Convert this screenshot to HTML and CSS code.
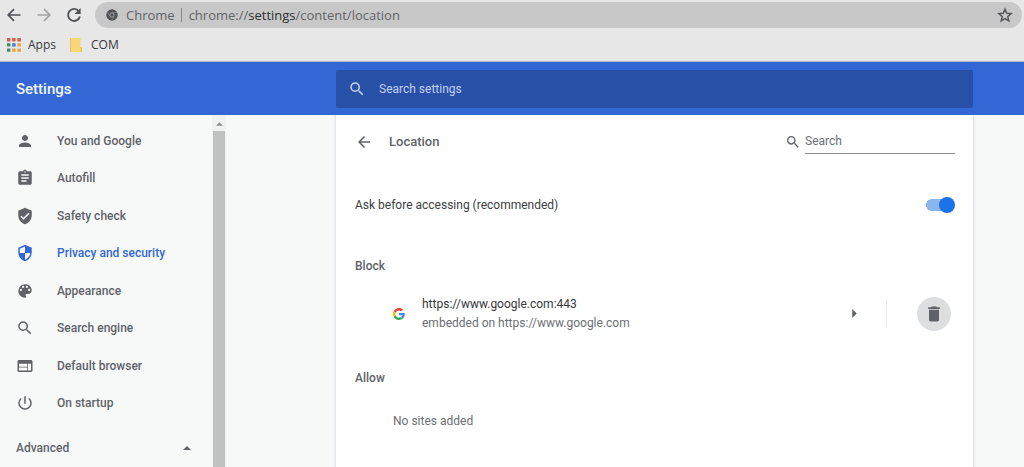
FILE: index.html
```html
<!DOCTYPE html>
<html lang="en">
<head>
<meta charset="utf-8">
<meta name="viewport" content="width=device-width, initial-scale=1">
<title>Settings - Location</title>
<link rel="stylesheet" href="styles.css">
</head>
<body>
<div class="browser">
  <div class="toolbar">
    <button class="tool" aria-label="Back"><svg viewBox="0 0 16 16"><path d="M14.500 8H2.500M8 2.200L2.200 8L8 13.800" fill="none" stroke="currentColor" stroke-width="1.700"/></svg></button>
    <button class="tool tool-off" aria-label="Forward"><svg viewBox="0 0 16 16"><path d="M1.500 8H13.500M8 2.200L13.800 8L8 13.800" fill="none" stroke="currentColor" stroke-width="1.700"/></svg></button>
    <button class="tool" aria-label="Reload"><svg viewBox="0 0 16 16"><path d="M12.800 4.200A6 6 0 1 0 13.900 9.400" fill="none" stroke="currentColor" stroke-width="1.900"/><path d="M14.600 1V7H8.600Z" fill="currentColor"/></svg></button>
    <div class="omnibox">
      <svg class="site-logo" viewBox="0 0 24 24"><circle cx="12" cy="12" r="11.500" fill="#4f5154"/><path d="M12 7H21.700M7.700 14.500L2.800 6M16.300 14.500L11.500 23" stroke="#8e8f91" stroke-width="1.200"/><circle cx="12" cy="12" r="4.300" fill="#4f5154" stroke="#b4b5b6" stroke-width="1.600"/></svg>
      <span class="site-name">Chrome</span>
      <span class="address">chrome://<b>settings</b>/content/location</span>
      <button class="star" aria-label="Bookmark this page"><svg viewBox="0 0 24 24"><path d="M12 3.200L14.600 9.300L21.300 9.900L16.200 14.300L17.700 20.800L12 17.400L6.300 20.800L7.800 14.300L2.700 9.900L9.400 9.300Z" fill="none" stroke="currentColor" stroke-width="2.200"/></svg></button>
    </div>
  </div>
  <div class="bookmarks">
    <a class="bookmark" href="#"><svg viewBox="0 0 14 14"><path fill="#dc5a46" d="M0 0h3.400v3.400H0zM5.200 0h3.400v3.400H5.200zM10.400 0h3.400v3.400h-3.400z"/><path fill="#3f8f68" d="M0 5.200h3.400v3.400H0zM0 10.400h3.400v3.400H0z"/><path fill="#3e7fd6" d="M5.200 5.200h3.400v3.400H5.200z"/><path fill="#e9a33b" d="M10.400 5.200h3.400v3.400h-3.400zM5.200 10.400h3.400v3.400H5.200zM10.400 10.400h3.400v3.400h-3.400z"/></svg>Apps</a>
    <a class="bookmark" href="#"><svg viewBox="0 0 14 14"><path fill="#f9d67c" d="M0 0H10.500V9H12V14H0Z"/><path fill="#eebf55" d="M0 0h1v14H0zM10.500 9h1.500v5h-1.500z"/></svg>COM</a>
  </div>
</div>

<header class="header">
  <h1 class="title">Settings</h1>
  <label class="search-all">
    <svg viewBox="0 0 24 24"><path fill="currentColor" d="M15.500 14h-.790l-.280-.270A6.471 6.471 0 0 0 16 9.500 6.500 6.500 0 1 0 9.500 16c1.610 0 3.090-.590 4.230-1.570l.270.280v.790l5 4.990L20.490 19l-4.990-5zm-6 0C7.010 14 5 11.990 5 9.500S7.010 5 9.500 5 14 7.010 14 9.500 11.990 14 9.500 14z"/></svg>
    <input type="search" placeholder="Search settings" aria-label="Search settings">
  </label>
</header>

<div class="page">
  <div class="side">
    <nav class="nav">
      <div class="links">
        <a class="link" href="#"><svg viewBox="0 0 24 24"><path d="M12 12c2.210 0 4-1.790 4-4s-1.790-4-4-4-4 1.790-4 4 1.790 4 4 4zm0 2c-2.670 0-8 1.340-8 4v2h16v-2c0-2.660-5.330-4-8-4z"/></svg>You and Google</a>
        <a class="link" href="#"><svg viewBox="0 0 24 24"><path d="M19 3h-4.180C14.400 1.840 13.300 1 12 1s-2.400.840-2.820 2H5c-1.100 0-2 .900-2 2v14c0 1.100.900 2 2 2h14c1.100 0 2-.900 2-2V5c0-1.100-.900-2-2-2zm-7 0c.550 0 1 .450 1 1s-.450 1-1 1-1-.450-1-1 .450-1 1-1zm2 14H7v-2h7v2zm3-4H7v-2h10v2zm0-4H7V7h10v2z"/></svg>Autofill</a>
        <a class="link" href="#"><svg viewBox="0 0 24 24"><path d="M12 1L3 5v6c0 5.550 3.840 10.740 9 12 5.160-1.260 9-6.450 9-12V5l-9-4zm-2 16l-4-4 1.410-1.410L10 14.170l6.590-6.590L18 9l-8 8z"/></svg>Safety check</a>
        <a class="link link-on" href="#" aria-current="page"><svg viewBox="0 0 24 24"><path d="M12 1L3 5v6c0 5.550 3.840 10.740 9 12 5.160-1.260 9-6.450 9-12V5l-9-4zm0 10.990h7c-.530 4.120-3.280 7.790-7 8.940V12H5V6.300l7-3.110v8.800z"/></svg>Privacy and security</a>
        <a class="link" href="#"><svg viewBox="0 0 24 24"><path d="M12 3a9 9 0 0 0 0 18c.830 0 1.500-.670 1.500-1.500 0-.390-.150-.740-.390-1.010-.230-.260-.380-.610-.380-.990 0-.830.670-1.500 1.500-1.500H16c2.760 0 5-2.240 5-5 0-4.420-4.030-8-9-8zm-5.500 9a1.500 1.500 0 1 1 0-3 1.500 1.500 0 0 1 0 3zm3-4a1.500 1.500 0 1 1 0-3 1.500 1.500 0 0 1 0 3zm5 0a1.500 1.500 0 1 1 0-3 1.500 1.500 0 0 1 0 3zm3 4a1.500 1.500 0 1 1 0-3 1.500 1.500 0 0 1 0 3z"/></svg>Appearance</a>
        <a class="link" href="#"><svg viewBox="0 0 24 24"><path d="M15.500 14h-.790l-.280-.270A6.471 6.471 0 0 0 16 9.500 6.500 6.500 0 1 0 9.500 16c1.610 0 3.090-.590 4.230-1.570l.270.280v.790l5 4.990L20.490 19l-4.990-5zm-6 0C7.010 14 5 11.990 5 9.500S7.010 5 9.500 5 14 7.010 14 9.500 11.990 14 9.500 14z"/></svg>Search engine</a>
        <a class="link" href="#"><svg viewBox="0 0 24 24"><path d="M20 4H4c-1.100 0-1.990.900-1.990 2L2 18c0 1.100.900 2 2 2h16c1.100 0 2-.900 2-2V6c0-1.100-.900-2-2-2zm-5 14H4v-4h11v4zm0-5H4V9h11v4zm5 5h-4V9h4v9z"/></svg>Default browser</a>
        <a class="link" href="#"><svg viewBox="0 0 24 24"><path d="M13 3h-2v10h2V3zm4.830 2.170l-1.420 1.420A6.920 6.920 0 0 1 19 12c0 3.870-3.130 7-7 7A6.995 6.995 0 0 1 7.580 6.580L6.170 5.170A8.932 8.932 0 0 0 3 12a9 9 0 0 0 18 0c0-2.740-1.230-5.180-3.170-6.830z"/></svg>On startup</a>
      </div>
      <button class="advanced">Advanced<svg viewBox="0 0 8 4"><path d="M0 4L4 0L8 4Z"/></svg></button>
    </nav>
    <div class="scroll" aria-hidden="true">
      <svg viewBox="0 0 8 4"><path d="M0 4L4 0L8 4Z"/></svg>
      <div class="thumb"></div>
    </div>
  </div>

  <main class="content">
    <section class="card">
      <div class="card-head">
        <button class="back" aria-label="Back"><svg viewBox="0 0 24 24"><path d="M20 11H7.830l5.590-5.590L12 4l-8 8 8 8 1.410-1.410L7.830 13H20v-2z"/></svg></button>
        <h2 class="card-title">Location</h2>
        <label class="search">
          <svg viewBox="0 0 24 24"><path d="M15.500 14h-.790l-.280-.270A6.471 6.471 0 0 0 16 9.500 6.500 6.500 0 1 0 9.500 16c1.610 0 3.090-.590 4.230-1.570l.270.280v.790l5 4.990L20.490 19l-4.990-5zm-6 0C7.010 14 5 11.990 5 9.500S7.010 5 9.500 5 14 7.010 14 9.500 11.990 14 9.500 14z"/></svg>
          <input type="search" placeholder="Search" aria-label="Search">
        </label>
      </div>
      <label class="ask">Ask before accessing (recommended)<input class="toggle" type="checkbox" role="switch" checked></label>
      <h3 class="group">Block</h3>
      <div class="site">
        <svg class="favicon" viewBox="0 0 48 48"><path fill="#ea4335" d="M24 9.500c3.540 0 6.710 1.220 9.210 3.600l6.850-6.850C35.900 2.380 30.470 0 24 0 14.620 0 6.510 5.380 2.560 13.220l7.980 6.190C12.430 13.720 17.740 9.500 24 9.500z"/><path fill="#4285f4" d="M46.980 24.550c0-1.570-.150-3.090-.380-4.550H24v9.020h12.940c-.580 2.960-2.260 5.480-4.780 7.180l7.730 6c4.510-4.180 7.090-10.360 7.090-17.650z"/><path fill="#fbbc05" d="M10.530 28.590a14.500 14.500 0 0 1 0-9.180l-7.980-6.190a23.940 23.940 0 0 0 0 21.560l7.980-6.190z"/><path fill="#34a853" d="M24 48c6.480 0 11.930-2.130 15.890-5.810l-7.730-6c-2.150 1.450-4.920 2.300-8.160 2.300-6.260 0-11.570-4.220-13.470-9.910l-7.980 6.190C6.510 42.620 14.620 48 24 48z"/></svg>
        <div class="site-text">
          <div class="site-url">https://www.google.com:443</div>
          <div class="site-note">embedded on https://www.google.com</div>
        </div>
        <button class="open" aria-label="Site details"><svg viewBox="0 0 4 8"><path d="M0 0L4 4L0 8Z"/></svg></button>
        <div class="delete-cell">
          <button class="delete" aria-label="Remove site"><svg viewBox="0 0 24 24"><path d="M6 19c0 1.100.900 2 2 2h8c1.100 0 2-.900 2-2V7H6v12zM19 4h-3.500l-1-1h-5l-1 1H5v2h14V4z"/></svg></button>
        </div>
      </div>
      <h3 class="group">Allow</h3>
      <p class="empty">No sites added</p>
    </section>
  </main>
</div>
</body>
</html>
```
FILE: styles.css
```css
* { box-sizing: border-box; }

body {
  margin: 0;
  height: 100vh;
  overflow: hidden;
  display: flex;
  flex-direction: column;
  background: #f7f9f9;
  color: #5f6368;
  font: 12px/20px Roboto, sans-serif;
}

svg { display: block; flex: none; fill: currentColor; }
button { border: 0; padding: 0; background: none; color: inherit; font: inherit; }
a { color: inherit; text-decoration: none; }
input { border: 0; padding: 0; margin: 0; background: none; font: inherit; outline: 0; }
h1, h2, h3, p { margin: 0; }

.browser {
  flex: none;
  background: #e7e7e7;
  border-bottom: 1px solid #b4bac8;
  font-family: "Open Sans", "Noto Sans", sans-serif;
  color: #505255;
}

.toolbar { display: flex; align-items: center; padding: 2px 2px 0 6px; }
.tool { width: 30px; }
.tool svg { width: 16px; height: 16px; }
.tool-off { color: #a2a3a4; }

.omnibox {
  flex: 1;
  display: flex;
  align-items: center;
  height: 26px;
  padding: 0 9px;
  margin-left: -1px;
  border-radius: 13px;
  background: #c8c8c8;
  color: #626467;
  font-size: 13px;
}
.site-logo { width: 12px; height: 12px; margin: 0 8px 0 2px; }
.site-name { padding-right: 6px; border-right: 1px solid #85878a; line-height: 14px; }
.address { padding-left: 7px; flex: 1; }
.address b { font-weight: 400; color: #2d2f31; }
.star { color: #55575a; }
.star svg { width: 16px; height: 16px; }

.bookmarks { display: flex; gap: 14px; height: 33px; align-items: center; padding: 0 7px; }
.bookmark { display: flex; align-items: center; gap: 7px; color: #37393c; }
.bookmark svg { width: 14px; height: 14px; }

.header {
  flex: none;
  display: grid;
  grid-template-columns: 336px 1fr;
  align-items: center;
  height: 53px;
  padding-right: 51px;
  background: #3367d6;
}
.title { padding-left: 16px; font-size: 15px; font-weight: 500; color: #f1f5fd; }
.search-all {
  display: flex;
  align-items: center;
  gap: 13px;
  height: 38px;
  padding: 0 12px;
  border-radius: 2px;
  background: #2850a7;
  color: #c3d1f0;
}
.search-all svg { width: 18px; height: 18px; }
.search-all input { flex: 1; min-width: 0; color: #fff; }
.search-all input::placeholder { color: #c3d1f0; opacity: 1; }

.page { flex: 1; min-height: 0; display: grid; grid-template-columns: 226px 1fr; }

.side { display: grid; grid-template-columns: 1fr 14px; min-height: 0; }
.nav { padding-top: 7px; font-weight: 500; }
.links { display: grid; grid-auto-rows: 1fr; height: 300px; }
.link { display: flex; align-items: center; gap: 23px; padding-left: 16px; }
.link svg { width: 18px; height: 18px; }
.link-on { color: #3367d6; }
.advanced {
  display: flex;
  align-items: center;
  justify-content: space-between;
  width: 100%;
  height: 52px;
  padding: 0 21px 0 16px;
}
.advanced svg { width: 8px; height: 4px; }

.scroll { display: flex; flex-direction: column; align-items: center; background: #f0f2f2; color: #8d8f91; }
.scroll svg { width: 7px; height: 4px; margin: 7px 0 5px; }
.thumb { width: 12px; flex: 1; background: #c1c1c1; }

.content { padding: 0 51px 0 110px; min-height: 0; }
.card {
  height: 100%;
  padding: 0 18px 0 19px;
  background: #fff;
  box-shadow: 0 0 2px 1px #dadce0;
  clip-path: inset(0 -4px);
}
.card-head { display: flex; align-items: center; height: 53px; }
.back svg { width: 18px; height: 18px; }
.card-title { flex: 1; padding-left: 16px; font-size: 13px; font-weight: 500; }
.search { display: flex; align-items: center; gap: 4px; }
.search svg { width: 16px; height: 16px; }
.search input { width: 150px; height: 24px; border-bottom: 1px solid #8c8f93; color: #202124; }
.search input::placeholder { color: #6b6f74; opacity: 1; }

.ask { display: flex; align-items: center; justify-content: space-between; height: 74px; color: #3c4043; }
.toggle {
  appearance: none;
  display: flex;
  align-items: center;
  width: 29px;
  height: 16px;
  background: linear-gradient(#8bb5ef, #8bb5ef) center / 100% 11px no-repeat;
  background: radial-gradient(circle at 6px 6px, #8bb5ef 6px, transparent 6px) 0 2px / 12px 12px no-repeat,
    linear-gradient(#8bb5ef, #8bb5ef) 6px 2px / 15px 12px no-repeat;
}
.toggle::before { content: ""; width: 16px; height: 16px; border-radius: 50%; background: #8a8d91; }
.toggle:checked { justify-content: flex-end; }
.toggle:checked::before { background: #1a73e8; }

.group { height: 48px; line-height: 48px; font-size: 12px; font-weight: 500; }

.site { display: flex; align-items: center; height: 47px; margin-bottom: 17px; padding-left: 38px; }
.favicon { width: 12px; height: 12px; }
.site-text { flex: 1; padding-left: 17px; line-height: 19px; }
.site-url { color: #34373b; }
.site-note { color: #6b6f74; }
.open { width: 36px; height: 36px; }
.open svg { width: 5px; height: 9px; margin: 0 auto; }
.delete-cell { height: 29px; display: flex; align-items: center; margin-left: 14px; padding: 0 4px 0 30px; border-left: 1px solid #e8eaed; }
.delete { width: 34px; height: 34px; border-radius: 50%; background: #dcdee0; }
.delete svg { width: 20px; height: 20px; margin: 0 auto; }

.empty { padding: 9px 0 0 38px; color: #6b6f74; }
```
